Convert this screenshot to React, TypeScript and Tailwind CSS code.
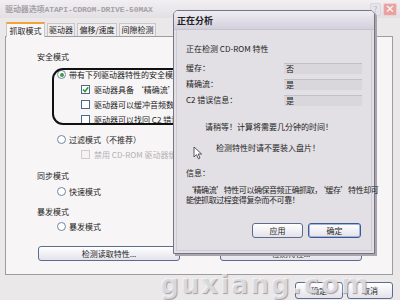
import type { ReactNode } from 'react'

const cjk = "font-['Noto_Sans_CJK_SC','Noto_Sans',sans-serif]"

function Radio({ on }: { on?: boolean }) {
  return (
    <span className="w-[9px] h-[9px] rounded-full border border-[#6f84a8] bg-white flex items-center justify-center shrink-0">
      {on && <span className="w-[4px] h-[4px] rounded-full bg-[#3f9a44]" />}
    </span>
  )
}

function Check({ on, disabled }: { on?: boolean; disabled?: boolean }) {
  return (
    <span
      className={`w-[9px] h-[9px] border flex items-center justify-center shrink-0 ${
        disabled ? 'border-[#cfccd1] bg-[#f4f2f3]' : 'border-[#4c6890] bg-white'
      }`}
    >
      {on && (
        <svg width="7" height="7" viewBox="0 0 7 7">
          <path d="M1 3.5 L3 5.5 L6.2 1.2" stroke="#2e9a36" strokeWidth="1.6" fill="none" />
        </svg>
      )}
    </span>
  )
}

function Row({ children, indent }: { children: ReactNode; indent: string }) {
  return <div className={`h-[15px] flex items-center gap-[3px] ${indent}`}>{children}</div>
}

function XpButton({ label, w, strong, h = 'h-[15px]' }: { label: string; w: string; strong?: boolean; h?: string }) {
  return (
    <div
      className={`${w} ${h} rounded-[3px] border ${
        strong ? 'border-[#3c5a8e] shadow-[inset_0_0_0_1px_#9fb7e0]' : 'border-[#5b6c8c]'
      } bg-gradient-to-b from-[#ffffff] to-[#e4e2ea] flex items-center justify-center text-[8px] text-[#1e1e1e] leading-none`}
    >
      {label}
    </div>
  )
}

function Field({ label, value }: { label: string; value: string }) {
  return (
    <div className="h-[16px] flex items-center">
      <span className="w-[99px]">{label}</span>
      <div className="w-[79px] h-[11px] bg-[#d9d6dc] border-t border-[#c2bfc6] flex items-center pl-[2px]">{value}</div>
    </div>
  )
}

function AnalyzeDialog() {
  return (
    <div className="absolute left-[173px] top-[10px] w-[202px] h-[244px] border border-[#77748a] rounded-t-[5px] bg-[#e3e0e5] shadow-[2px_2px_0_#a9a6ab] flex flex-col">
      <div className="h-[19px] rounded-t-[4px] bg-gradient-to-b from-[#efedf3] to-[#d3d0dc] border-b border-[#c7c4cf] flex items-center pl-[3px] text-[9px] font-bold text-[#202020]">
        正在分析
      </div>
      <div className="flex-1 mx-[2px] mb-[2px] border-x border-b border-[#cfccd5] px-[9px] text-[8px] text-[#222] leading-none flex flex-col">
        <div className="h-[15px] mt-[11px] flex items-center">正在检测 CD-ROM 特性</div>
        <div className="mt-[4px]">
          <Field label="缓存：" value="否" />
          <Field label="精确流：" value="是" />
          <Field label="C2 错误信息：" value="是" />
        </div>
        <div className="h-[12px] mt-[13px] flex items-center justify-center pr-[10px]">请稍等！计算将需要几分钟的时间！</div>
        <div className="h-[12px] mt-[9px] flex items-center">
          <svg width="10" height="14" viewBox="0 0 10 14" className="ml-[7px] mt-[10px]">
            <path d="M1 1 L1 11 L3.5 8.6 L5.4 12.8 L7 12 L5.2 8 L8.6 8 Z" fill="#fff" stroke="#333" strokeWidth="0.8" />
          </svg>
          <span className="ml-[13px]">检测特性时请不要装入盘片！</span>
        </div>
        <div className="h-[12px] mt-[13px] flex items-center">信息：</div>
        <div className="mt-[6px] leading-[10px] whitespace-nowrap tracking-[-0.45px]">
          ‘精确流’特性可以确保音频正确抓取，‘缓存’特性却可
          <br />
          能使抓取过程变得复杂而不可靠！
        </div>
        <div className="flex-1" />
        <div className="flex justify-end gap-[5px] mb-[12px] mr-[1px]">
          <XpButton label="应用" w="w-[51px]" />
          <XpButton label="确定" w="w-[53px]" strong />
        </div>
      </div>
    </div>
  )
}

export default function App() {
  return (
    <div className={`relative w-[400px] h-[300px] overflow-hidden bg-[#ebe8ea] ${cjk} text-[8px] text-[#222] leading-none`}>
      {/* title bar */}
      <div className="h-[18px] flex items-center justify-between pl-[5px] pr-[3px] bg-gradient-to-b from-[#f1eff1] to-[#e3e0e4]">
        <span className="text-[8px] font-bold text-[#a5a1a7] font-['Liberation_Mono',monospace] tracking-[-0.1px]">
          <span className={cjk}>驱动器选项</span>ATAPI-CDROM-DRIVE-50MAX
        </span>
        <div className="flex gap-[2px]">
          <span className="w-[11px] h-[13px] rounded-[2px] border border-[#d8d5dc] bg-[#e6e3ea] text-[#b8b4bd] text-[8px] flex items-center justify-center">?</span>
          <span className="w-[14px] h-[13px] rounded-[2px] border border-[#f0d0d0] bg-[#e8a2a2] text-white text-[10px] font-bold flex items-center justify-center">×</span>
        </div>
      </div>

      {/* tabs */}
      <div className="h-[16px] mt-[2px] pl-[6px] flex items-end gap-[2px]">
        <div className="h-[15px] w-[39px] border-x border-t-2 border-[#c9c6cb] border-t-[#f2a43a] bg-[#f8f6f7] flex items-center justify-center relative top-[1px] z-10">
          抓取模式
        </div>
        <div className="h-[13px] w-[28px] border-x border-t border-[#c9c6cb] bg-[#efedee] flex items-center justify-center">驱动器</div>
        <div className="h-[13px] w-[40px] border-x border-t border-[#c9c6cb] bg-[#efedee] flex items-center justify-center">偏移/速度</div>
        <div className="h-[13px] w-[37px] border-x border-t border-[#c9c6cb] bg-[#efedee] flex items-center justify-center">间隙检测</div>
      </div>

      {/* tab panel */}
      <div className="relative ml-[5px] w-[388px] h-[239px] border border-[#9e9ba1] bg-[#f7f5f6] flex flex-col">
        <div className="absolute left-[46px] top-[31px] w-[160px] h-[57px] rounded-[11px] border-2 border-[#111]" />
        <Row indent="mt-[12px] ml-[31px]">安全模式</Row>
        <Row indent="mt-[3px] ml-[51px]">
          <Radio on />
          <span>带有下列驱动器特性的安全模式</span>
        </Row>
        <Row indent="ml-[75px] gap-[4px]">
          <Check on />
          <span>驱动器具备 ‘精确流’ 特性</span>
        </Row>
        <Row indent="ml-[75px] gap-[4px]">
          <Check />
          <span>驱动器可以缓冲音频数据</span>
        </Row>
        <Row indent="ml-[75px] gap-[4px]">
          <Check />
          <span>驱动器可以找回 C2 错误信息</span>
        </Row>
        <Row indent="mt-[5px] ml-[51px]">
          <Radio />
          <span>过滤模式（不推荐）</span>
        </Row>
        <Row indent="ml-[75px] gap-[4px]">
          <Check disabled />
          <span className="text-[#b3b0b5]">禁用 CD-ROM 驱动器缓存</span>
        </Row>
        <Row indent="mt-[6px] ml-[31px]">同步模式</Row>
        <Row indent="mt-[1px] ml-[51px]">
          <Radio />
          <span>快速模式</span>
        </Row>
        <Row indent="mt-[5px] ml-[31px]">暴发模式</Row>
        <Row indent="ml-[51px]">
          <Radio />
          <span>暴发模式</span>
        </Row>
        <div className="mt-[12px] ml-[32px] flex gap-[40px]">
          <XpButton label="检测读取特性..." w="w-[142px]" />
          <XpButton label="检测特性..." w="w-[142px]" />
        </div>
      </div>

      {/* bottom buttons */}
      <div className="mt-[7px] flex justify-end gap-[4px] pr-[7px]">
        <XpButton label="确定" w="w-[48px]" h="h-[17px]" />
        <XpButton label="取消" w="w-[46px]" h="h-[17px]" />
      </div>

      <AnalyzeDialog />

      {/* watermark */}
      <div className="absolute left-[160px] top-[271px] text-[26px] font-bold tracking-[2px] text-[#ffffff99] font-['DejaVu_Sans',sans-serif] [text-shadow:1px_1px_1px_#a19da6]">
        guxiang.com
      </div>
    </div>
  )
}
